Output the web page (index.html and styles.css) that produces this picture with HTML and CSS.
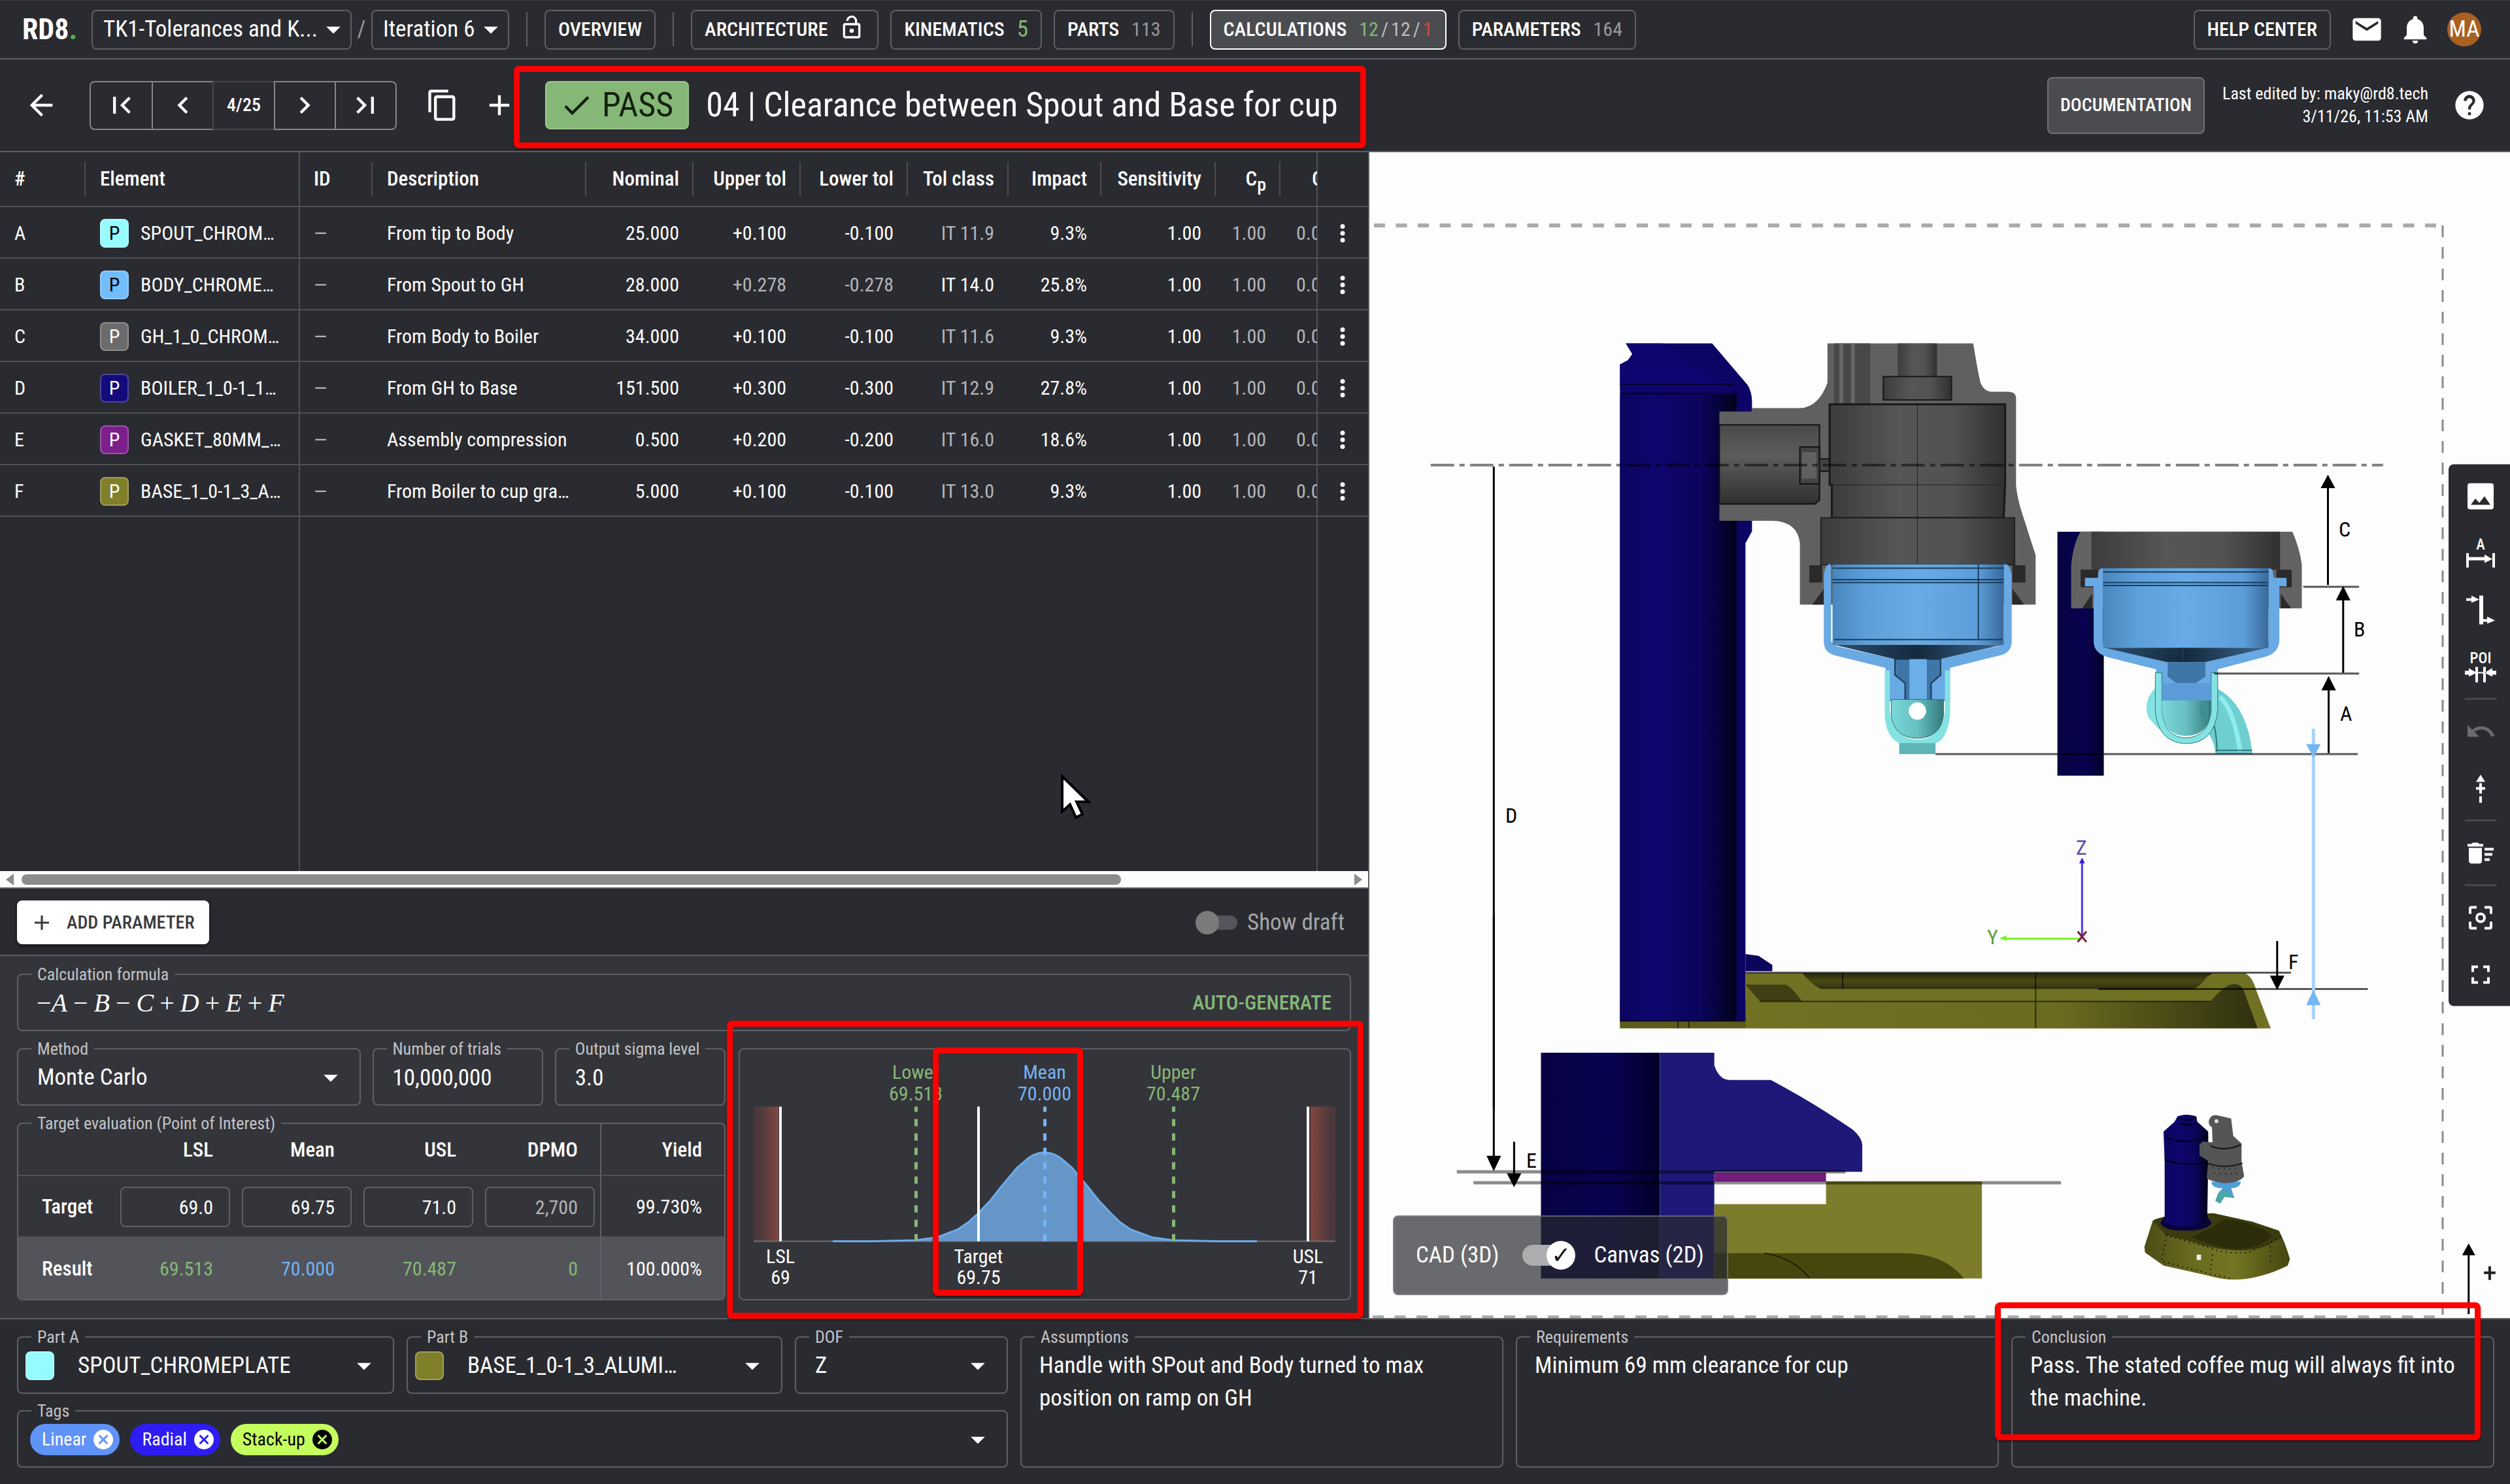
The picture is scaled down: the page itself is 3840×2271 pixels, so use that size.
FILE: index.html
```
<!DOCTYPE html>
<html lang="en">
<head>
<meta charset="utf-8">
<title>RD8 – 04 | Clearance between Spout and Base for cup</title>
<link rel="stylesheet" href="styles.css">
</head>
<body>
<svg class="defs" aria-hidden="true">
  <symbol id="i-drop" viewBox="0 0 24 24"><path d="M7 10l5 5 5-5z"/></symbol>
  <symbol id="i-add" viewBox="0 0 24 24"><path d="M19 13h-6v6h-2v-6H5v-2h6V5h2v6h6z"/></symbol>
  <symbol id="i-more" viewBox="0 0 24 24"><path d="M12 8a2 2 0 1 0 0-4 2 2 0 0 0 0 4zm0 2a2 2 0 1 0 0 4 2 2 0 0 0 0-4zm0 6a2 2 0 1 0 0 4 2 2 0 0 0 0-4z"/></symbol>
  <symbol id="i-cancel" viewBox="0 0 24 24"><path d="M12 2a10 10 0 1 0 0 20 10 10 0 0 0 0-20zm5 13.6L15.600 17 12 13.400 8.400 17 7 15.600 10.600 12 7 8.400 8.400 7 12 10.600 15.600 7 17 8.400 13.400 12z"/></symbol>
</svg>

<nav class="topbar">
  <a class="logo" href="#">RD8<i>.</i></a>
  <div class="pick pick-project"><select aria-label="Project"><option>TK1-Tolerances and K...</option></select><svg class="ic"><use href="#i-drop"/></svg></div>
  <span class="slash">/</span>
  <div class="pick pick-iteration"><select aria-label="Iteration"><option>Iteration 6</option></select><svg class="ic"><use href="#i-drop"/></svg></div>
  <span class="sep"></span>
  <button class="tab">OVERVIEW</button>
  <span class="sep"></span>
  <button class="tab">ARCHITECTURE <svg class="lock" viewBox="0 0 24 24"><path d="M18 8h-1V6c0-2.760-2.240-5-5-5S7 3.240 7 6h2c0-1.660 1.340-3 3-3s3 1.340 3 3v2H6a2 2 0 0 0-2 2v10c0 1.100.9 2 2 2h12a2 2 0 0 0 2-2V10a2 2 0 0 0-2-2zm0 12H6V10h12v10zm-6-3a2 2 0 1 0 0-4 2 2 0 0 0 0 4z"/></svg></button>
  <button class="tab">KINEMATICS <span class="green big">5</span></button>
  <button class="tab">PARTS <span class="dim">113</span></button>
  <span class="sep"></span>
  <button class="tab active">CALCULATIONS <span class="counts"><b class="green">12</b><b>/</b><b>12</b><b>/</b><b class="red">1</b></span></button>
  <button class="tab">PARAMETERS <span class="dim">164</span></button>
  <span class="push"></span>
  <button class="tab help">HELP CENTER</button>
  <button class="icon-btn" aria-label="Messages"><svg class="ic" viewBox="0 0 24 24"><path d="M20 4H4a2 2 0 0 0-2 2v12c0 1.100.9 2 2 2h16a2 2 0 0 0 2-2V6a2 2 0 0 0-2-2zm0 4l-8 5-8-5V6l8 5 8-5z"/></svg></button>
  <button class="icon-btn" aria-label="Notifications"><svg class="ic" viewBox="0 0 24 24"><path d="M12 22a2 2 0 0 0 2-2h-4c0 1.100.9 2 2 2zm6-6v-5c0-3.070-1.630-5.640-4.500-6.320V4a1.500 1.500 0 0 0-3 0v.68C7.640 5.360 6 7.920 6 11v5l-2 2v1h16v-1z"/></svg></button>
  <button class="avatar">MA</button>
</nav>

<header class="titlebar">
  <button class="icon-btn" aria-label="Back"><svg class="ic" viewBox="0 0 24 24"><path d="M20 11H7.830l5.590-5.590L12 4l-8 8 8 8 1.410-1.410L7.830 13H20z"/></svg></button>
  <div class="pager">
    <button aria-label="First"><svg class="ic" viewBox="0 0 24 24"><path d="M18.410 16.590L13.820 12l4.590-4.590L17 6l-6 6 6 6zM6 6h2v12H6z"/></svg></button>
    <button aria-label="Previous"><svg class="ic" viewBox="0 0 24 24"><path d="M15.410 7.410L14 6l-6 6 6 6 1.410-1.410L10.830 12z"/></svg></button>
    <span>4/25</span>
    <button aria-label="Next"><svg class="ic" viewBox="0 0 24 24"><path d="M8.590 16.590L10 18l6-6-6-6-1.410 1.410L13.170 12z"/></svg></button>
    <button aria-label="Last"><svg class="ic" viewBox="0 0 24 24"><path d="M5.590 7.410L10.180 12l-4.590 4.590L7 18l6-6-6-6zM16 6h2v12h-2z"/></svg></button>
  </div>
  <button class="icon-btn copy" aria-label="Copy"><svg class="ic" viewBox="0 0 24 24"><path d="M16 1H4a2 2 0 0 0-2 2v14h2V3h12V1zm3 4H8a2 2 0 0 0-2 2v14c0 1.100.9 2 2 2h11a2 2 0 0 0 2-2V7a2 2 0 0 0-2-2zm0 16H8V7h11v14z"/></svg></button>
  <button class="icon-btn add" aria-label="Add"><svg class="ic"><use href="#i-add"/></svg></button>
  <div class="heading">
    <span class="pass"><svg class="ic" viewBox="0 0 24 24"><path d="M9 16.170L4.830 12l-1.420 1.410L9 19 21 7l-1.410-1.410z"/></svg>PASS</span>
    <h1>04 | Clearance between Spout and Base for cup</h1>
    <span class="mark mark-title"></span>
  </div>
  <span class="push"></span>
  <button class="doc">DOCUMENTATION</button>
  <p class="edited">Last edited by: maky@rd8.tech<br>3/11/26, 11:53 AM</p>
  <button class="icon-btn" aria-label="Help"><svg class="ic" viewBox="0 0 24 24"><path d="M12 2a10 10 0 1 0 0 20 10 10 0 0 0 0-20zm1 17h-2v-2h2v2zm2.070-7.750l-.9.920C13.450 12.900 13 13.500 13 15h-2v-.5c0-1.100.45-2.100 1.170-2.830l1.240-1.260A2 2 0 1 0 10 9H8a4 4 0 1 1 7.070 2.250z"/></svg></button>
</header>

<main class="work">
  <section class="left">
    <div class="grid-region">
      <table class="params">
        <colgroup><col class="c-n"><col class="c-el"><col class="c-id"><col class="c-desc"><col class="c-num"><col class="c-num"><col class="c-num"><col class="c-cls"><col class="c-imp"><col class="c-sens"><col class="c-cp"><col class="c-cut"><col class="c-menu"></colgroup>
        <thead><tr><th class="sp">#</th><th>Element</th><th class="sp">ID</th><th class="sp">Description</th><th class="r sp">Nominal</th><th class="r sp">Upper tol</th><th class="r sp">Lower tol</th><th class="r sp">Tol class</th><th class="r sp">Impact</th><th class="r sp">Sensitivity</th><th class="r sp">C<sub>p</sub></th><th class="cut">C</th><th></th></tr></thead>
        <tbody>
          <tr><td>A</td><td><div class="el"><span class="chip spout">P</span>SPOUT_CHROM…</div></td><td class="mute">—</td><td>From tip to Body</td><td class="r">25.000</td><td class="r">+0.100</td><td class="r">-0.100</td><td class="r mute">IT 11.9</td><td class="r">9.3%</td><td class="r">1.00</td><td class="r mute">1.00</td><td class="cut mute">0.0</td><td class="menu"><button aria-label="Row menu"><svg class="kb"><use href="#i-more"/></svg></button></td></tr>
          <tr><td>B</td><td><div class="el"><span class="chip sky">P</span>BODY_CHROME…</div></td><td class="mute">—</td><td>From Spout to GH</td><td class="r">28.000</td><td class="r mute">+0.278</td><td class="r mute">-0.278</td><td class="r">IT 14.0</td><td class="r">25.8%</td><td class="r">1.00</td><td class="r mute">1.00</td><td class="cut mute">0.0</td><td class="menu"><button aria-label="Row menu"><svg class="kb"><use href="#i-more"/></svg></button></td></tr>
          <tr><td>C</td><td><div class="el"><span class="chip gh">P</span>GH_1_0_CHROM…</div></td><td class="mute">—</td><td>From Body to Boiler</td><td class="r">34.000</td><td class="r">+0.100</td><td class="r">-0.100</td><td class="r mute">IT 11.6</td><td class="r">9.3%</td><td class="r">1.00</td><td class="r mute">1.00</td><td class="cut mute">0.0</td><td class="menu"><button aria-label="Row menu"><svg class="kb"><use href="#i-more"/></svg></button></td></tr>
          <tr><td>D</td><td><div class="el"><span class="chip boiler">P</span>BOILER_1_0-1_1…</div></td><td class="mute">—</td><td>From GH to Base</td><td class="r">151.500</td><td class="r">+0.300</td><td class="r">-0.300</td><td class="r mute">IT 12.9</td><td class="r">27.8%</td><td class="r">1.00</td><td class="r mute">1.00</td><td class="cut mute">0.0</td><td class="menu"><button aria-label="Row menu"><svg class="kb"><use href="#i-more"/></svg></button></td></tr>
          <tr><td>E</td><td><div class="el"><span class="chip gasket">P</span>GASKET_80MM_…</div></td><td class="mute">—</td><td>Assembly compression</td><td class="r">0.500</td><td class="r">+0.200</td><td class="r">-0.200</td><td class="r mute">IT 16.0</td><td class="r">18.6%</td><td class="r">1.00</td><td class="r mute">1.00</td><td class="cut mute">0.0</td><td class="menu"><button aria-label="Row menu"><svg class="kb"><use href="#i-more"/></svg></button></td></tr>
          <tr><td>F</td><td><div class="el"><span class="chip base">P</span>BASE_1_0-1_3_A…</div></td><td class="mute">—</td><td>From Boiler to cup gra…</td><td class="r">5.000</td><td class="r">+0.100</td><td class="r">-0.100</td><td class="r mute">IT 13.0</td><td class="r">9.3%</td><td class="r">1.00</td><td class="r mute">1.00</td><td class="cut mute">0.0</td><td class="menu"><button aria-label="Row menu"><svg class="kb"><use href="#i-more"/></svg></button></td></tr>
        </tbody>
      </table>
      <svg class="pointer" viewBox="0 0 47 70"><path d="M3 3V57L15 46 24 66 34 61 25 42H43Z" fill="#fff" stroke="#000" stroke-width="4"/></svg>
    </div>
    <div class="scroll"><svg viewBox="0 0 12 18"><path d="M12 0v18L0 9z"/></svg><div class="track"><span></span></div><svg viewBox="0 0 12 18"><path d="M0 0v18l12-9z"/></svg></div>
    <div class="addbar">
      <button class="add-param"><svg viewBox="5 5 14 14"><use href="#i-add" width="24" height="24"/></svg>ADD PARAMETER</button>
      <label class="draft"><input type="checkbox">Show draft</label>
    </div>
    <div class="panel">
      <fieldset class="field"><legend>Calculation formula</legend>
        <div class="body formula"><span class="math">−<i>A</i><s>−</s><i>B</i><s>−</s><i>C</i><s>+</s><i>D</i><s>+</s><i>E</i><s>+</s><i>F</i></span><button class="auto">AUTO-GENERATE</button></div>
      </fieldset>
      <div class="split">
        <div class="stack">
          <div class="trio">
            <fieldset class="field"><legend><label for="method">Method</label></legend><div class="body pick"><select id="method"><option>Monte Carlo</option></select><svg class="ic"><use href="#i-drop"/></svg></div></fieldset>
            <fieldset class="field"><legend><label for="trials">Number of trials</label></legend><div class="body"><input id="trials" value="10,000,000"></div></fieldset>
            <fieldset class="field"><legend><label for="sigma">Output sigma level</label></legend><div class="body"><input id="sigma" value="3.0"></div></fieldset>
          </div>
          <fieldset class="field target"><legend>Target evaluation (Point of Interest)</legend>
            <table>
              <colgroup><col class="t-label"><col class="t-val"><col class="t-val"><col class="t-val"><col class="t-val"><col></colgroup>
              <thead><tr><th></th><th>LSL</th><th>Mean</th><th>USL</th><th>DPMO</th><th class="yield">Yield</th></tr></thead>
              <tbody>
                <tr><th>Target</th><td class="in"><input aria-label="Target LSL" value="69.0"></td><td class="in"><input aria-label="Target mean" value="69.75"></td><td class="in"><input aria-label="Target USL" value="71.0"></td><td class="in"><input aria-label="Target DPMO" class="mute" value="2,700"></td><td class="yield">99.730%</td></tr>
                <tr class="result"><th>Result</th><td class="green">69.513</td><td class="blue">70.000</td><td class="green">70.487</td><td class="green">0</td><td class="yield">100.000%</td></tr>
              </tbody>
            </table>
          </fieldset>
        </div>
        <div class="chart">
          <svg viewBox="0 0 933 381">
            <defs>
              <linearGradient id="rl"><stop offset="0" stop-color="#4a383b"/><stop offset=".3" stop-color="#503a3d"/><stop offset="1" stop-color="#84463f"/></linearGradient>
              <linearGradient id="rr"><stop offset="0" stop-color="#84463f"/><stop offset=".7" stop-color="#503a3d"/><stop offset="1" stop-color="#4a383b"/></linearGradient>
            </defs>
            <rect x="21" y="87" width="38" height="206" fill="url(#rl)"/><rect x="873" y="87" width="38" height="206" fill="url(#rr)"/>
            <path d="M21 293H911" stroke="#6f6f70" stroke-width="2"/>
            <path d="M203 293L269 291.500 302 287 334 274.600 350 263.600 366 248.800 383 230.700 399 210.500 416 190.300 424 180.500 433 173 441 166 449 161.200 457 158.200 466 157 475 158.200 483 161.200 491 166 499 173 508 180.500 516 190.300 533 210.500 549 230.700 566 248.800 581 263.600 597 274.600 630 287 663 291.500 729 293Z" fill="#6696c8"/>
            <path d="M142 293H203L269 291.500 302 287 334 274.600 350 263.600 366 248.800 383 230.700 399 210.500 416 190.300 424 180.500 433 173 441 166 449 161.200 457 158.200 466 157 475 158.200 483 161.200 491 166 499 173 508 180.500 516 190.300 533 210.500 549 230.700 566 248.800 581 263.600 597 274.600 630 287 663 291.500 729 293H791" fill="none" stroke="#6cabea" stroke-width="3"/>
            <g fill="none" stroke-width="5" stroke-dasharray="11 11"><path d="M269.500 293V87" stroke="#85b877"/><path d="M466.500 293V87" stroke="#74b3f5"/><path d="M663.500 293V87" stroke="#85b877"/></g>
            <g stroke="#fff" stroke-width="4"><path d="M62 87V293M365 87V293M869 87V293"/></g>
            <g class="ct">
              <g class="tg"><text x="269" y="44">Lower</text><text x="269" y="77">69.513</text><text x="663" y="44">Upper</text><text x="663" y="77">70.487</text></g>
              <g class="tb"><text x="466" y="44">Mean</text><text x="466" y="77">70.000</text></g>
              <text x="62" y="326">LSL</text><text x="62" y="358">69</text><text x="365" y="326">Target</text><text x="365" y="358">69.75</text><text x="869" y="326">USL</text><text x="869" y="358">71</text>
            </g>
          </svg>
          <span class="mark mark-chart"></span><span class="mark mark-mean"></span>
        </div>
      </div>
    </div>
  </section>

  <section class="canvas">
    <svg class="drawing" viewBox="2095 233 1745 1784" preserveAspectRatio="xMidYMid meet">
      <defs>
        <linearGradient id="navy"><stop offset="0" stop-color="#0b0560"/><stop offset=".3" stop-color="#0e066d"/><stop offset=".7" stop-color="#0b055c"/><stop offset="1" stop-color="#02001a"/></linearGradient>
        <linearGradient id="navy2"><stop offset="0" stop-color="#060242"/><stop offset=".6" stop-color="#070350"/><stop offset="1" stop-color="#03002a"/></linearGradient>
        <linearGradient id="gray"><stop offset="0" stop-color="#3c3c3c"/><stop offset=".4" stop-color="#565656"/><stop offset=".7" stop-color="#525252"/><stop offset="1" stop-color="#303030"/></linearGradient>
        <linearGradient id="grayv" x2="0" y2="1"><stop offset="0" stop-color="#4a4a4a"/><stop offset=".4" stop-color="#5c5c5c"/><stop offset="1" stop-color="#303030"/></linearGradient>
        <linearGradient id="sky"><stop offset="0" stop-color="#4a86bd"/><stop offset=".2" stop-color="#5c9fda"/><stop offset=".5" stop-color="#68abe6"/><stop offset=".85" stop-color="#5b9dd8"/><stop offset="1" stop-color="#39699a"/></linearGradient>
        <linearGradient id="cone"><stop offset="0" stop-color="#2b5073"/><stop offset=".5" stop-color="#15293c"/><stop offset="1" stop-color="#3a6894"/></linearGradient>
        <linearGradient id="teal"><stop offset="0" stop-color="#7cd8da"/><stop offset=".5" stop-color="#66bfc1"/><stop offset="1" stop-color="#347a7c"/></linearGradient>
        <linearGradient id="olv" x2="0" y2="1"><stop offset="0" stop-color="#27270a"/><stop offset=".5" stop-color="#4a4a15"/><stop offset="1" stop-color="#303010"/></linearGradient>
        <linearGradient id="olh"><stop offset="0" stop-color="#717122"/><stop offset=".6" stop-color="#6b6b20"/><stop offset="1" stop-color="#303010"/></linearGradient>
        <linearGradient id="olm"><stop offset="0" stop-color="#4b4b15"/><stop offset=".3" stop-color="#68681f"/><stop offset=".62" stop-color="#757524"/><stop offset="1" stop-color="#45450f"/></linearGradient>
      </defs>
      <g fill="none" stroke="#ababab">
        <path d="M2102 345H3730" stroke-width="6" stroke-dasharray="17 16.500"/>
        <path d="M3737 345V2012" stroke-width="3" stroke="#8a8a8a" stroke-dasharray="18 15"/>
        <path d="M2100 2015H3737" stroke-width="4" stroke-dasharray="17 16.500"/>
      </g>
      <!-- main section view -->
      <g class="thin" transform="translate(2100 450) scale(1.1097 .7334)">
        <path d="M341 1475H1215L1238 1532H341Z" fill="#6e6e22"/>
        <path d="M514 1417H1203Q1213 1425 1218 1452L1238 1532H514Z" fill="#717123"/>
        <path d="M592 1417H1159L1150 1425Q1140 1448 1130 1450H618Q608 1444 592 1417Z" fill="url(#olv)"/>
        <path d="M514 1441H570Q580 1450 592 1476H534Z" fill="#3f3f13"/>
        <path d="M534 1476H1155Q1175 1440 1188 1440 1196 1440 1200 1450L1220 1532H534Z" fill="url(#olh)"/>
        <path d="M341 1517H514V1532H341Z" fill="#5c5c1a"/>
        <path d="M514 1377L532 1381 551 1400V1413H514Z" fill="#0b055c"/>
        <path d="M349 103H468L517 190Q523 205 523 225V495L514 520V1517H341V147L352 138 358 125Z" fill="#0c0565"/>
        <path d="M341 210H501V1517H341Z" fill="url(#navy)"/>
        <path d="M349 103H400L440 150 495 200H341V147L352 138 358 125Z" fill="#0e0670"/>
        <path d="M341 188H498M341 208H500M341 1517H514M501 200V1510M421 1517V1532M436 1517V1532M914 1417V1532M648 1417V1450M534 1476H1155" fill="none" stroke="#000" stroke-opacity=".6" stroke-width="2"/>
        <path d="M627 103H828Q834 160 838 185 843 204 855 204H876Q887 204 887 218V400Q889 430 897 465L914 545V648H589V520Q586 475 552 473H478V245H523V238H590Q615 235 627 185Z" fill="#606060"/>
        <path d="M636 103H686V230H636Z" fill="#484848"/><path d="M646 103V228M662 103V228" stroke="#666" stroke-width="6" fill="none"/>
        <path d="M478 273H616V430L610 438H478Z" fill="url(#grayv)" stroke="#111" stroke-width="2"/>
        <path d="M589 319H616V396H589ZM616 344H630V370H616Z" fill="#444" stroke="#111" stroke-width="2"/><path d="M592 330H612V385H592Z" fill="#606060"/>
        <path d="M724 103H778V172H724Z" fill="url(#gray)"/>
        <path d="M704 172H798V221H704Z" fill="url(#gray)" stroke="#181818" stroke-width="2"/>
        <path d="M630 230H872V398L870 467H633V398H630Z" fill="url(#gray)" stroke="#181818" stroke-width="3"/>
        <path d="M618 467H885V565H618Z" fill="url(#gray)" stroke="#222" stroke-width="2"/>
        <path d="M602 566H620V602H602ZM882 566H900V602H882ZM606 648L622 615V648ZM898 648L882 615V648Z" fill="#2a2a2a"/>
        <path d="M630 398H872M751 230V565" stroke="#222" stroke-width="1" fill="none"/>
        <path d="M622 585Q625 560 632 564V725L640 735 720 762H782L862 735 870 725V564Q878 560 881 585V725Q881 750 862 755L796 780V850H707V780L640 755Q622 750 622 725Z" fill="#69a9e4"/>
        <path d="M634 564H870V732H634Z" fill="url(#sky)"/><path d="M636 732H868L782 762H720Z" fill="url(#cone)"/>
        <path d="M634 572H870M634 596H870M634 602H870M636 721H868M835 564V721" fill="none" stroke="#1a3c5c" stroke-width="2"/>
        <path d="M720 762H783V795L770 812V849H734V812L720 795Z" fill="#3f76a8" stroke="#1b3953" stroke-width="2"/><path d="M740 762H764V850H740Z" fill="#6cafe8"/>
        <path d="M706 785H713V870Q718 928 751 930 785 928 789 870V785H796V880Q792 930 776 937V960H726V937Q708 925 706 880Z" fill="#84e2e2"/>
        <path d="M715 846H787V880Q783 926 751 927 719 926 715 880Z" fill="url(#teal)" stroke="#2c6f70" stroke-width="1"/><path d="M726 937H776V960H726Z" fill="#5fb4b5"/>
        <ellipse cx="751" cy="870" rx="12" ry="18" fill="#fff"/>
        <!-- second section -->
        <path d="M944 496H1008V1005H944Z" fill="url(#navy2)"/>
        <path d="M976 496H1268Q1278 530 1281 565V656H963V565Q966 520 976 496Z" fill="#626262"/>
        <path d="M991 496H1251V575H991Z" fill="url(#gray)"/><path d="M976 575H1000V612H976ZM1246 575H1267V612H1246ZM978 656L992 625V656ZM1266 656L1252 625V656Z" fill="#2a2a2a"/>
        <path d="M982 592H1000Q1000 570 1007 572V725L1020 740 1095 768H1148L1225 740 1235 725V572Q1242 570 1242 592H1260V610H1250V725Q1248 750 1230 757L1165 783V850H1080V783L1012 757Q994 748 994 725V610H982Z" fill="#69a9e4"/>
        <path d="M1007 572H1235V738H1007Z" fill="url(#sky)"/><path d="M1009 738H1234L1148 768H1095Z" fill="url(#cone)"/>
        <path d="M1007 580H1235M1007 602H1235M1007 608H1235M1117 738V800" fill="none" stroke="#1a3c5c" stroke-width="2"/>
        <path d="M1160 820Q1205 850 1213 960H1162Q1160 920 1140 900Z" fill="#6fcfd0"/><path d="M1168 840Q1188 870 1196 955" fill="none" stroke="#8eeced" stroke-width="7"/><path d="M1162 952H1212M1160 900Q1164 925 1164 955" fill="none" stroke="#2c7778" stroke-width="2"/><path d="M1080 820Q1060 850 1070 885L1085 910Z" fill="#84e2e2"/>
        <path d="M1079 790H1088V870Q1092 925 1121 926 1152 925 1156 870V790H1165V870Q1160 938 1121 938 1083 936 1079 870Z" fill="#84e2e2" stroke="#2c7778" stroke-width="1"/>
        <path d="M1096 768H1148V798L1135 812H1108L1096 798Z" fill="#3f76a8"/><path d="M1088 812H1156V848H1088Z" fill="#5b9cd9"/><path d="M1088 848H1156V870Q1152 922 1121 922 1092 922 1088 870Z" fill="url(#teal)"/>
        <path d="M1152 852Q1138 855 1140 870 1140 885 1152 890Z" fill="#3d8f90"/>
        <!-- construction lines and dimensions -->
        <path d="M80 357H1393" fill="none" stroke="#000" stroke-opacity=".5" stroke-width="4" stroke-dasharray="36 8 8 8"/>
        <path d="M776 960H1358M1160 792H1360M1283 611H1360M514 1416H1266M1000 1450H1372" fill="none" stroke="#000" stroke-opacity=".65" stroke-width="3"/>
        <path d="M167 360V1700M1317 607V380M1338 790V615M1318 958V800M1247 1350V1448" stroke="#000" stroke-width="3" fill="none"/>
        <path d="M1317 377l10 28h-20zM1338 609l10 30h-20zM1318 797l10 30h-20zM1247 1452l-10-30h20z"/>
        <path d="M1297 907V1513" stroke="#a9d2fa" stroke-width="5" fill="none"/><path d="M1297 967l-10-28h20zM1297 1452l-10 32h20z" fill="#74b6f2"/>
        <path d="M978 1345V1180" stroke="#4a3af0" stroke-width="3" fill="none"/><path d="M978 1345H868" stroke="#7cf32e" stroke-width="3" fill="none"/>
        <path d="M974 1188L978 1176 982 1188Z" fill="#3120d0"/><path d="M874 1338L864 1344 874 1350Z" fill="#7cf32e"/>
        <path d="M972 1330L984 1352M984 1330L972 1352" stroke="#7c2038" stroke-width="3"/>
      </g>
      <!-- detail view and overview model -->
      <g class="thin" transform="translate(2100 1400) scale(1.1097 .5555)">
        <path d="M232 380H396V1002H232Z" fill="url(#navy2)"/>
        <path d="M396 380H471V415Q478 455 492 455H549Q610 520 662 592 675 615 675 635V708H471V1002H396Z" fill="#1e1878"/>
        <path d="M471 710H625V735H471Z" fill="#741d7f"/><path d="M625 735H840V1002H471V797H625Z" fill="#7c7c2b"/>
        <path d="M471 932H735Q790 935 815 1002H471Z" fill="#46460f"/><path d="M540 932Q580 945 602 1000" fill="none" stroke="#222205" stroke-width="2"/>
        <path d="M116 708H652M139 738H949" stroke="#000" stroke-opacity=".45" stroke-width="5" fill="none"/>
        <path d="M167 0V690M195 625V740M1511 1100V915" stroke="#000" stroke-width="3" fill="none"/>
        <path d="M167 706l-10-42h20zM195 750l-10-38h20zM1511 905l9 33h-18z"/>
        <path d="M1532 986h16M1540 968v38" stroke="#222" stroke-width="4"/>
      </g>
      <g transform="translate(3260 1690) scale(.3333)">
        <path d="M62 655L100 535Q150 500 380 500L560 540 680 580Q710 640 730 710L720 740Q600 800 480 805 420 805 350 785L150 740 65 680Z" fill="url(#olm)"/>
        <path d="M100 535Q150 505 380 500L560 540 675 580 690 610Q600 680 470 670 350 660 280 630L160 600Z" fill="#3b3b10"/>
        <path d="M400 550L430 525Q560 540 650 600 600 665 480 665 380 655 280 610Z" fill="#2c2c0a"/>
        <path d="M160 600L350 655Q430 690 540 680L690 610M165 600L140 720 350 775 460 800M375 690L365 760M640 650V730" fill="none" stroke="#111" stroke-width="5" stroke-dasharray="6 16"/>
        <path d="M302 690h20v25h-20z" fill="#eee"/>
        <path d="M135 545Q150 520 160 510H348L370 545Q350 580 250 580 150 580 135 545Z" fill="#08033e"/>
        <path d="M215 55Q250 40 300 55L305 80 355 125V265L350 545Q250 575 155 545V265L150 125 200 80Z" fill="url(#navy)"/>
        <path d="M155 255Q250 290 352 262M155 150Q250 190 355 150M212 60Q255 85 300 60M220 85Q255 105 300 85" fill="none" stroke="#02001d" stroke-width="6"/>
        <path d="M370 355H505Q500 385 460 385L475 430 430 420 410 455 388 445 400 410 420 385Q370 385 370 355Z" fill="#4d9fd6"/><path d="M405 400L440 395 475 430 430 425 410 455 388 440Z" fill="#4ba6a8"/>
        <path d="M358 75Q365 45 395 50L430 58 460 65 470 145 508 180V265L520 330Q500 360 430 362 370 355 348 340L355 260 315 235V185L330 170 375 175 372 105Q355 95 358 75Z" fill="#555"/>
        <path d="M365 190Q430 220 505 185M352 270Q430 300 512 270" fill="none" stroke="#1d1d1d" stroke-width="7"/><path d="M375 290Q430 305 505 290M380 315Q430 325 505 315" fill="none" stroke="#111" stroke-width="4" stroke-dasharray="6 20"/>
        <circle cx="393" cy="77" r="9" fill="#ddd"/>
      </g>
      <g class="dims">
        <text x="2303" y="1259">D</text><text x="3578" y="821">C</text><text x="3601" y="974">B</text><text x="3580" y="1103">A</text><text x="3501" y="1483">F</text><text x="2335" y="1787">E</text>
        <text x="3176" y="1308" fill="#5b4ab0">Z</text><text x="3040" y="1445" fill="#5aa03c">Y</text>
      </g>
    </svg>

    <div class="tools">
      <button aria-label="Image"><svg viewBox="0 0 48 48"><path fill-rule="evenodd" d="M8 4H40a4 4 0 0 1 4 4V40a4 4 0 0 1-4 4H8a4 4 0 0 1-4-4V8a4 4 0 0 1 4-4zM9 37H39L30 24 22 34 16 27.500Z"/></svg></button>
      <button aria-label="Dimension"><svg viewBox="0 0 48 48"><text x="24" y="18">A</text><path d="M2 24h4v22H2zM42 24h4v22h-4zM6 30h24v-4l12 7-12 6v-4H6z"/></svg></button>
      <button aria-label="Step"><svg viewBox="0 0 48 48"><path d="M22 2h6v44h-6zM2 6h8V2l12 6-12 5V10H2zM28 38h6v-4l12 6-12 5v-3h-6z"/></svg></button>
      <button aria-label="Point of interest"><svg viewBox="0 0 48 48"><text x="24" y="18">POI</text><path d="M16 24h4v24h-4zM28 24h4v24h-4zM0 30h6v-4l12 7-12 6v-3H0zM48 30h-6v-4l-12 7 12 6v-3h6zM18 32h12v2H18z"/></svg></button>
      <hr>
      <button aria-label="Undo" disabled><svg viewBox="0 0 24 24"><path d="M12.500 8c-2.650 0-5.050.99-6.900 2.600L2 7v9h9l-3.620-3.620c1.390-1.160 3.160-1.880 5.120-1.880 3.540 0 6.550 2.310 7.600 5.500l2.370-.78C21.080 11.030 17.150 8 12.500 8z"/></svg></button>
      <button aria-label="Direction"><svg viewBox="0 0 48 48"><path d="M24 3l7 11H17zM22 16h4v6h5v4h-5v6h-4v-6h-5v-4h5zM22 36h4v10h-4z"/></svg></button>
      <hr>
      <button aria-label="Clear"><svg viewBox="0 0 24 24"><path d="M15 16h4v2h-4zM15 8h7v2h-7zM15 12h6v2h-6zM3 18c0 1.100.9 2 2 2h6a2 2 0 0 0 2-2V8H3zM14 5h-3l-1-1H6L5 5H2v2h12z"/></svg></button>
      <hr>
      <button aria-label="Center"><svg viewBox="0 0 24 24"><path d="M5 15H3v4a2 2 0 0 0 2 2h4v-2H5zM5 5h4V3H5a2 2 0 0 0-2 2v4h2zM19 3h-4v2h4v4h2V5a2 2 0 0 0-2-2zM19 19h-4v2h4a2 2 0 0 0 2-2v-4h-2zM12 8a4 4 0 1 0 0 8 4 4 0 0 0 0-8zm0 6a2 2 0 1 1 0-4 2 2 0 0 1 0 4z"/></svg></button>
      <button aria-label="Full screen"><svg viewBox="0 0 24 24"><path d="M7 14H5v5h5v-2H7zM5 10h2V7h3V5H5zM17 17h-3v2h5v-5h-2zM14 5v2h3v3h2V5z"/></svg></button>
    </div>
    <label class="mode">CAD (3D)<input type="checkbox" checked>Canvas (2D)</label>
  </section>
</main>

<footer class="meta">
  <div class="meta-left">
    <fieldset class="field"><legend><label for="pa">Part A</label></legend><div class="body pick swatched"><i class="swatch spout"></i><select id="pa"><option>SPOUT_CHROMEPLATE</option></select><svg class="ic"><use href="#i-drop"/></svg></div></fieldset>
    <fieldset class="field"><legend><label for="pb">Part B</label></legend><div class="body pick swatched"><i class="swatch base"></i><select id="pb"><option>BASE_1_0-1_3_ALUMI…</option></select><svg class="ic"><use href="#i-drop"/></svg></div></fieldset>
    <fieldset class="field"><legend><label for="dof">DOF</label></legend><div class="body pick"><select id="dof"><option>Z</option></select><svg class="ic"><use href="#i-drop"/></svg></div></fieldset>
    <fieldset class="field tags"><legend>Tags</legend><div class="body">
      <span class="tag linear">Linear<button aria-label="Remove Linear"><svg><use href="#i-cancel"/></svg></button></span>
      <span class="tag radial">Radial<button aria-label="Remove Radial"><svg><use href="#i-cancel"/></svg></button></span>
      <span class="tag stackup">Stack-up<button aria-label="Remove Stack-up"><svg><use href="#i-cancel"/></svg></button></span>
      <span class="push"></span><svg class="ic"><use href="#i-drop"/></svg></div></fieldset>
  </div>
  <fieldset class="field note"><legend><label for="as">Assumptions</label></legend><textarea id="as">Handle with SPout and Body turned to max position on ramp on GH</textarea></fieldset>
  <fieldset class="field note"><legend><label for="rq">Requirements</label></legend><textarea id="rq">Minimum 69 mm clearance for cup</textarea></fieldset>
  <div class="note-wrap">
    <fieldset class="field note"><legend><label for="co">Conclusion</label></legend><textarea id="co">Pass. The stated coffee mug will always fit into the machine.</textarea></fieldset>
    <span class="mark mark-conclusion"></span>
  </div>
</footer>
</body>
</html>
```
FILE: styles.css
```
*{box-sizing:border-box}
:root{--bg:#2a2b30;--panel:#34353a;--line:#5f6065;--grid:#505154;--mute:#b5b5b8;--green:#85b877;--blue:#74b3f5}
body{margin:0;min-height:100vh;display:flex;flex-direction:column;background:var(--bg);color:#fff;font-family:"Roboto Condensed",Roboto,sans-serif;font-size:30px;line-height:36px}
button,input,select,textarea{font:inherit;color:inherit;background:none;border:0;padding:0;margin:0;outline:0}
svg{fill:currentColor;flex:none}
i,s,b{font-style:normal;font-weight:inherit;text-decoration:none}
.defs{display:none}
.ic{width:52px;height:52px;display:block}
.push{flex:1}
.green{color:var(--green)}
.blue{color:var(--blue)}
.red{color:#d0473d}
.mute{color:var(--mute)}
.mark{position:absolute;border:9px solid #f00;border-radius:8px;box-shadow:0 2px 3px rgba(0,0,0,.5);z-index:5;pointer-events:none}

/* top navigation */
.topbar{display:flex;align-items:center;height:91px;padding:0 44px 0 34px;border-top:1px solid #3b3c40;border-bottom:2px solid var(--line)}
.logo{width:106px;color:#fff;text-decoration:none;font-size:44px;font-weight:700;line-height:60px}
.logo i{color:#5cb04e}
.pick{display:grid;align-items:center}
.pick>*{grid-area:1/1}
.pick select{appearance:none;width:100%;height:100%;font-size:35px}
.pick .ic{justify-self:end;pointer-events:none}
.topbar .pick{height:61px;border:2px solid var(--line);border-radius:8px}
.topbar .pick select{padding-left:16px}
.pick-project{width:398px}
.pick-iteration{width:211px}
.slash{width:30px;text-align:center;font-size:35px;color:#9a9a9c}
.sep{width:2px;height:52px;margin:0 26px;background:var(--line)}
.tab{display:flex;align-items:center;gap:19px;height:61px;padding:0 19px;border:2px solid var(--line);border-radius:8px;font-size:30px;font-weight:500;white-space:nowrap}
.tab+.tab{margin-left:18px}
.tab .lock{width:40px;height:40px;margin:-6px 0 0 -2px}
.tab .big{font-size:35px;font-weight:400}
.tab .dim{color:#98989b;font-weight:400}
.tab.active{background:#4b4c50;border-color:#fff}
.counts{display:flex;gap:4px;color:#bdbdbf;font-weight:400}
.icon-btn{display:block}
.topbar .icon-btn{margin-left:22px}
.topbar .help+.icon-btn{margin-left:29px}
.avatar{width:52px;height:52px;margin-left:23px;border-radius:50%;background:#a96123;font-size:35px;text-align:center}

/* title bar */
.titlebar{display:flex;align-items:center;height:142px;padding:0 36px 0 37px;border-bottom:2px solid var(--line)}
.pager{display:grid;grid-template-columns:repeat(5,1fr);width:470px;height:75px;margin-left:48px;border:2px solid #85868a;border-radius:8px;font-size:28px;font-weight:500}
.pager>*{display:grid;place-items:center;border-left:2px solid #85868a}
.pager>:first-child{border-left:0}
.pager span{margin:-2px 0;border-color:#47484c;border-top:2px solid #47484c;border-bottom:2px solid #47484c}
.copy{margin-left:44px}
.add{margin-left:35px}
.heading{position:relative;display:flex;align-items:center;gap:26px;margin-left:44px}
.pass{display:flex;align-items:center;gap:13px;height:74px;padding:0 22px 0 20px;border:2px solid #9bc68f;border-radius:8px;background:var(--green);color:#16200f;font-size:52px}
h1{margin:0;font-size:52px;line-height:60px;font-weight:400;white-space:nowrap}
.mark-title{inset:-23px -43px -29px -48px}
.doc{height:87px;padding:0 18px;border:2px solid #717276;border-radius:8px;background:#4b4c50;font-size:28px;font-weight:500}
.edited{margin:0 37px 0 27px;font-size:26px;line-height:35px;text-align:right}

/* work area */
.work{flex:1;display:grid;grid-template-columns:2095fr 1745fr}
.left{min-width:0;display:flex;flex-direction:column;border-right:2px solid var(--line)}
.grid-region{position:relative;flex:1;overflow:hidden;background:linear-gradient(var(--grid),var(--grid)) 457px 0/2px 100% no-repeat,linear-gradient(var(--grid),var(--grid)) right 77px top 0/2px 100% no-repeat}
.params{width:100%;table-layout:fixed;border-collapse:separate;border-spacing:0}
.c-n{width:131px}.c-el{width:327px}.c-id{width:112px}.c-num{width:164px}.c-cls{width:154px}.c-imp{width:142px}.c-sens{width:175px}.c-cp{width:99px}.c-cut{width:56px}.c-menu{width:78px}
.params th,.params td{height:79px;padding:2px 22px 0;border-bottom:2px solid var(--grid);text-align:left;font-weight:400;white-space:nowrap}
.params th{height:84px;padding-top:0;font-size:31px;font-weight:500}
.params th.sp{background:linear-gradient(#4c4d50,#4c4d50) right center/2px 52px no-repeat}
.params .r{text-align:right}
.params th sub{font-size:28px;line-height:20px;vertical-align:-8px}
.params .cut{padding-left:24px;padding-right:0;overflow:hidden}
.params th.cut{padding-left:48px}
.params .menu{padding-left:0;padding-right:0}
.menu button{display:block;margin:0 auto}
.kb{display:block;width:42px;height:42px}
.el{display:flex;align-items:center;gap:18px}
.chip{width:44px;height:44px;border:2px solid rgba(255,255,255,.25);border-radius:8px;text-align:center;line-height:40px}
.spout{background:#96fbff;color:#000}
.sky{background:#72bdfc;color:#000}
.gh{background:#6b6b6b}
.boiler{background:#130a7c}
.gasket{background:#7c1e8b}
.base{background:#80802a}
.pointer{position:absolute;left:77.5%;top:86.5%;width:47px;height:70px}
.scroll{display:flex;align-items:center;gap:12px;height:25px;padding:0 9px;background:#fcfcfc;color:#8b8b8b}
.scroll svg{width:12px;height:18px}
.track{flex:1}
.track span{display:block;width:83%;height:16px;border-radius:8px;background:#8b8b8b}
.addbar{display:flex;align-items:center;justify-content:space-between;height:105px;padding:2px 36px 0 26px;border:solid var(--line);border-width:2px 0}
.add-param{display:flex;align-items:center;gap:27px;height:67px;padding:0 22px 0 27px;border-radius:8px;background:#fff;color:#3a3b3f;font-size:28px;font-weight:500;box-shadow:0 3px 6px rgba(0,0,0,.5)}
.add-param svg{width:22px;height:22px}
.draft,.mode{display:flex;align-items:center;font-size:35px}
.draft{gap:15px;color:#a5a5a8}
.draft input,.mode input{appearance:none;display:flex;align-items:center}
.draft input{width:64px;height:36px}
.draft input::before{content:"";width:36px;height:36px;border-radius:50%;background:#7b7b7b;z-index:1}
.draft input::after{content:"";width:40px;height:22px;margin-left:-12px;border-radius:11px;background:#55565b}

/* labelled outline fields */
.field{min-width:0;margin:0;padding:0;border:2px solid var(--line);border-radius:8px}
.field legend{margin-left:20px;padding:0 9px;font-size:26px;line-height:28px;color:#c3c3c6}
.field .body{height:82px;margin-top:-11px}
.field .body>input{width:100%;height:100%;padding-left:29px;font-size:35px}
.field .body select{padding-left:29px}
.field .pick .ic{margin-right:18px}

/* evaluation panel */
.panel{display:flex;flex-direction:column;gap:13px;padding:14px 26px 27px;background:var(--panel)}
.formula{display:flex;align-items:center;justify-content:space-between;padding:0 28px}
.math{font-family:"Liberation Serif",serif;font-size:40px;line-height:48px}
.math i{font-style:italic}
.math s{margin:0 9px}
.auto{color:var(--green);font-size:31px;font-weight:500}
.split{display:grid;grid-template-columns:1084fr 937fr;gap:20px}
.stack{display:flex;flex-direction:column;gap:13px;min-width:0}
.trio{display:grid;grid-template-columns:525fr 261fr 261fr;gap:18px}
.target table{width:100%;margin-top:-14px;table-layout:fixed;border-collapse:separate;border-spacing:0}
.t-label{width:146px}.t-val{width:186px}
.target th,.target td{height:94px;padding:2px 34px 0 0;text-align:right;font-weight:400}
.target thead th{height:81px;border-bottom:2px solid var(--grid);font-weight:500;font-size:31px}
.target tbody th{padding:2px 0 0 36px;text-align:left;font-weight:500;font-size:31px}
.target tbody tr:first-child>*{border-bottom:2px solid var(--grid)}
.target td.in{padding:2px 8px 0 10px}
.target input{display:block;width:100%;height:62px;padding-right:24px;border:2px solid var(--line);border-radius:8px;text-align:right}
.target .yield{border-left:2px solid var(--line)}
.result{background:#53545a}
.chart{position:relative;margin-top:13px;border:2px solid var(--line);border-radius:8px}
.chart svg{display:block;width:100%;height:100%}
.ct text{font-size:30px;text-anchor:middle;fill:#fff}
.ct .tg text{fill:var(--green)}
.ct .tb text{fill:var(--blue)}
.mark-chart{inset:-44px -21px -30px -20px}
.mark-mean{left:31.6%;top:-3px;width:230px;height:380px}

/* drawing canvas */
.canvas{position:relative;min-width:0;overflow:hidden;background:#fdfdfd}
.drawing{position:absolute;inset:0;width:100%;height:100%;fill:#000}
.thin path{vector-effect:non-scaling-stroke}
.dims text{font-size:32px}
.tools{position:absolute;right:0;top:50%;transform:translateY(-50%);display:flex;flex-direction:column;width:94px;padding:5px 0;border-radius:8px 0 0 8px;background:var(--bg)}
.tools button{height:87px;display:grid;place-items:center;padding-left:4px}
.tools button:disabled{color:#6a6b6f}
.tools svg{width:48px;height:48px}
.tools text{font-size:23px;font-weight:500;text-anchor:middle}
.tools hr{width:48px;height:2px;margin:5px auto;border:0;background:#55565a;transform:translateX(2px)}
.mode{position:absolute;left:36px;bottom:35px;height:122px;gap:28px;padding:0 35px 0 33px;border:2px solid rgba(140,140,145,.6);border-radius:8px;background:rgba(42,43,48,.7)}
.mode input{width:81px;height:44px;margin-left:8px}
.mode input::before{content:"";width:66px;height:32px;border-radius:16px;background:#adadb0}
.mode input::after{content:"✓";width:44px;height:44px;margin-left:-29px;border-radius:50%;background:#fff;color:#111;font-family:"DejaVu Sans",sans-serif;font-size:36px;line-height:44px;text-align:center}

/* metadata */
.meta{display:grid;grid-template-columns:1516fr 739fr 739fr 739fr;gap:19px;padding:13px 24px 25px 26px;border-top:2px solid var(--line)}
.meta-left{display:grid;grid-template-columns:577fr 575fr 326fr;gap:12px 19px}
.tags{grid-column:1/-1}
.swatched .swatch{width:44px;height:44px;margin-left:11px;border:2px solid rgba(255,255,255,.25);border-radius:8px}
.field .swatched select{padding-left:91px}
.tags .body{display:flex;align-items:center;gap:16px;padding-left:18px}
.tags .ic{margin-right:18px}
.tag{display:flex;align-items:center;gap:8px;height:48px;padding:0 7px 0 18px;border-radius:24px;font-size:28px}
.tag button{display:block}
.tag svg{display:block;width:36px;height:36px}
.linear{background:#6093f8}
.radial{background:#2d1df2}
.stackup{background:#c5ff5e;color:#000}
.note{height:100%}
.note textarea{display:block;width:100%;height:calc(100% - 2px);padding:5px 27px;font-size:35px;line-height:50px;resize:none;overflow:hidden}
.note-wrap{position:relative}
.mark-conclusion{inset:-39px 21px 42px -25px}
```
